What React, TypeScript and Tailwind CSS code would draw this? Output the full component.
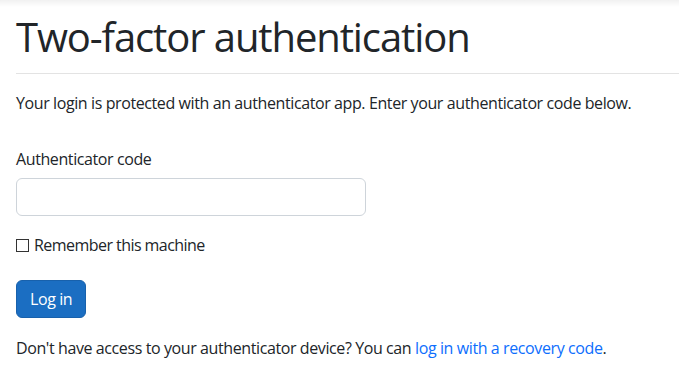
export default function App() {
  return (
    <div className="min-h-screen bg-white text-[#212529] font-['Segoe_UI','Open_Sans',sans-serif] tracking-[-0.4px]">
      <div className="h-[7px] bg-gradient-to-b from-[#f1f1f1] to-white" />
      <main className="pl-4">
        <h1 className="mt-[6px] text-[40px] leading-[48px] font-normal tracking-[-1.1px]">Two-factor authentication</h1>
        <hr className="mt-[12px] border-0 border-t border-[#e3e3e3]" />
        <p className="mt-[17px] text-[16px] leading-6">
          Your login is protected with an authenticator app. Enter your authenticator code below.
        </p>
        <form className="mt-[32px] w-[350px]">
          <label htmlFor="code" className="block text-[16px] leading-6">
            Authenticator code
          </label>
          <input
            id="code"
            type="text"
            className="mt-[7px] block h-[38px] w-[350px] rounded-[6px] border border-[#ced4da] px-3 text-[16px] outline-none"
          />
          <label className="mt-[17px] flex items-center gap-[5px] text-[16px] leading-6 tracking-[-0.55px]">
            <span className="h-[13px] w-[13px] border border-[#333] bg-white" />
            Remember this machine
          </label>
          <button
            type="button"
            className="mt-[23px] h-[38px] rounded-[6px] border border-[#1861ac] bg-[#1b6ec2] px-[13px] text-[16px] text-white"
          >
            Log in
          </button>
        </form>
        <p className="mt-[18px] text-[16px] leading-6">
          Don't have access to your authenticator device? You can{" "}
          <a href="#" className="text-[#0d6efd]">
            log in with a recovery code
          </a>
          .
        </p>
      </main>
    </div>
  );
}
